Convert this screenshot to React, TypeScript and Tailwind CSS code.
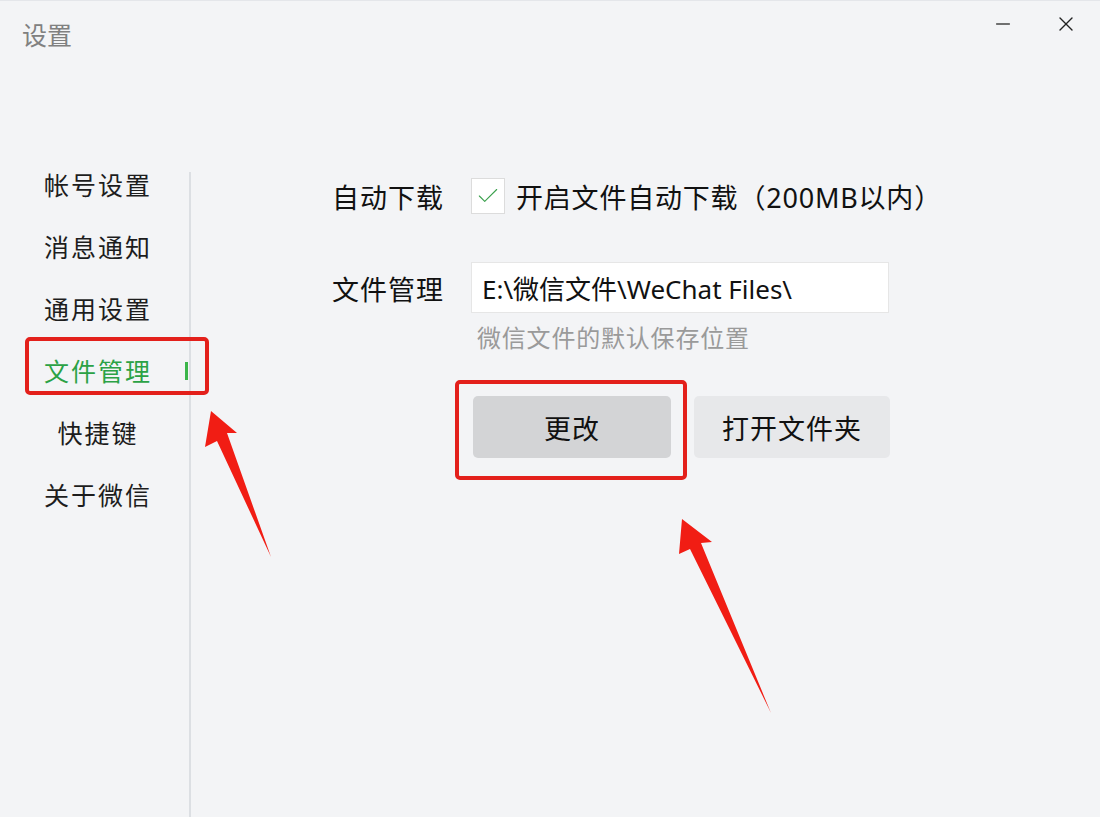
import { Check, Minus, X } from 'lucide-react';

const navItems = ['帐号设置', '消息通知', '通用设置', '文件管理', '快捷键', '关于微信'];

export default function App() {
  return (
    <div
      className="relative w-[1100px] h-[817px] bg-[#f3f4f6] text-[#111] overflow-hidden border-t border-[#e4e6ea]"
      style={{ fontFamily: '"Noto Sans", "Noto Sans CJK SC", sans-serif' }}
    >
      {/* Title bar */}
      <div className="flex items-start h-[153px]">
        <div className="pl-[22px] pt-[16px] text-[25px] leading-[36px] text-[#808080]">设置</div>
        <div className="ml-auto flex items-center gap-[40px] pr-[22px] pt-[11px]">
          <Minus className="w-[22px] h-[22px] text-[#444]" strokeWidth={1.4} />
          <X className="w-[24px] h-[24px] text-[#222]" strokeWidth={1.4} />
        </div>
      </div>

      {/* Body */}
      <div className="flex h-[664px]">
        {/* Sidebar */}
        <div className="w-[189px] flex flex-col">
          {navItems.map((item) => {
            const active = item === '文件管理';
            return (
              <div key={item} className="h-[62px] flex items-center">
                <div
                  className={`ml-[40px] w-[114px] pl-[2px] text-center text-[25px] tracking-[2px] leading-[30px] ${
                    active ? 'text-[#2ba245]' : 'text-[#1d1d1d]'
                  }`}
                >
                  {item}
                </div>
                {active && <div className="ml-auto mr-[1px] w-[3px] h-[18px] bg-[#3bb54a]" />}
              </div>
            );
          })}
        </div>
        <div className="w-[2px] mt-[18px] bg-[#dcdfe3]" />

        {/* Main */}
        <div className="flex-1 pl-[141px] pt-[24px]">
          <div className="flex items-center h-[36px]">
            <div className="w-[139px] pt-[4px] text-[27px] tracking-[1px] leading-[36px]">自动下载</div>
            <div className="w-[34px] h-[36px] bg-white border border-[#dcdcdc] flex items-center justify-center">
              <Check className="w-[26px] h-[26px] text-[#3aa04c]" strokeWidth={1} />
            </div>
            <div className="ml-[11px] pt-[4px] text-[27px] tracking-[0.8px] leading-[36px]">开启文件自动下载（200MB以内）</div>
          </div>

          <div className="flex items-center mt-[48px] h-[51px]">
            <div className="w-[139px] pt-[4px] text-[27px] tracking-[1px] leading-[36px]">文件管理</div>
            <div className="w-[418px] h-[51px] bg-white border border-[#e6e6e6] flex items-center pl-[10px] pt-[3px] text-[26px] leading-[36px]">
              E:\微信文件\WeChat Files\
            </div>
          </div>
          <div className="ml-[145px] mt-[11px] text-[24px] tracking-[0.8px] leading-[28px] text-[#9a9a9a]">
            微信文件的默认保存位置
          </div>

          <div className="flex ml-[141px] mt-[44px] gap-[23px]">
            <div className="w-[198px] h-[62px] pt-[5px] rounded-[5px] bg-[#d3d4d6] flex items-center justify-center text-[27px] tracking-[1px]">
              更改
            </div>
            <div className="w-[196px] h-[62px] pt-[5px] rounded-[5px] bg-[#e7e8ea] flex items-center justify-center text-[27px] tracking-[1px]">
              打开文件夹
            </div>
          </div>
        </div>
      </div>

      {/* Annotations */}
      <div className="absolute left-[25px] top-[336px] w-[184px] h-[58px] border-[4px] border-[#e3201b] rounded-[5px]" />
      <div className="absolute left-[455px] top-[379px] w-[232px] h-[100px] border-[4px] border-[#e3201b] rounded-[5px]" />
      <svg className="absolute left-0 top-0" width="1100" height="817" viewBox="0 0 1100 817">
        <path d="M211 410 L237 432 L227 432 L271 556 L217 440 L205 446 Z" fill="#f11d14" />
        <path d="M682 518 L712 541 L701 542 L771 712 L690 548 L679 553 Z" fill="#f11d14" />
      </svg>
    </div>
  );
}
